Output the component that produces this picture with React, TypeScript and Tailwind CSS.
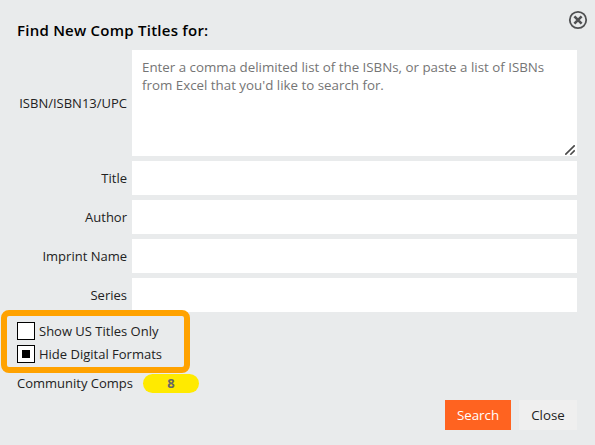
import React, { useState } from 'react'
import { clsx } from 'clsx'

const FIELDS = ['Title', 'Author', 'Imprint Name', 'Series']

interface CheckboxRowProps {
  label: string
  checked: boolean
  onChange: (checked: boolean) => void
}

/**
 * CheckboxRow - square checkbox with a filled block when selected
 */
function CheckboxRow({ label, checked, onChange }: CheckboxRowProps) {
  return (
    <button
      type="button"
      role="checkbox"
      aria-checked={checked}
      onClick={() => onChange(!checked)}
      className="flex h-[18px] items-center gap-1 text-left"
    >
      <span className="flex size-[18px] items-center justify-center border border-black bg-white">
        <span className={clsx('size-2', checked && 'bg-black')} />
      </span>
      <span className="leading-[18px]">{label}</span>
    </button>
  )
}

function CloseIcon() {
  return (
    <svg className="size-5" viewBox="0 0 20 20" fill="none" stroke="#4f5052">
      <circle cx="10" cy="10" r="8.2" strokeWidth="1.8" />
      <path d="M6.4 6.4l7.2 7.2M13.6 6.4l-7.2 7.2" strokeWidth="2.6" />
    </svg>
  )
}

// Grip in the corner of the ISBN box
function ResizeGrip() {
  return (
    <svg
      className="pointer-events-none absolute right-[2px] bottom-[1px] h-[10px] w-[10px]"
      viewBox="0 0 10 10"
      fill="none"
      stroke="#4a4a4a"
      strokeWidth="1.6"
    >
      <path d="M0.3 9.7L9.7 0.3M5.3 9.7L9.7 5.3" />
    </svg>
  )
}

export default function App() {
  const [usOnly, setUsOnly] = useState(false)
  const [hideDigital, setHideDigital] = useState(true)

  return (
    <div className="relative h-[445px] w-[595px] bg-[#e9ebec] pt-5 pr-[18px] pl-[17px] font-['Open_Sans',sans-serif] text-[13px] text-[#222]">
      <button type="button" aria-label="Close dialog" className="absolute top-[10px] right-[7px]">
        <CloseIcon />
      </button>

      <h1 className="h-[30px] text-[15px] leading-[21px] font-semibold tracking-[0.24px] text-black">
        Find New Comp Titles for:
      </h1>

      <div className="flex flex-col gap-[5px]">
        <div className="flex h-[106px] items-center">
          <label htmlFor="isbn" className="w-[110px] pt-[2px] text-right">
            ISBN/ISBN13/UPC
          </label>
          <div className="relative ml-[5px] h-full flex-1">
            <textarea
              id="isbn"
              className="block size-full resize-none bg-white px-[10px] py-2 text-[13.333px] leading-[18px] outline-none placeholder:text-[#757575]"
              placeholder="Enter a comma delimited list of the ISBNs, or paste a list of ISBNs from Excel that you'd like to search for."
            />
            <ResizeGrip />
          </div>
        </div>

        {FIELDS.map((field) => (
          <div key={field} className="flex h-[34px] items-center">
            <label htmlFor={field} className="w-[110px] pt-[2px] text-right">
              {field}
            </label>
            <input id={field} type="text" className="ml-[5px] h-full min-w-0 flex-1 bg-white px-[10px] outline-none" />
          </div>
        ))}
      </div>

      {/* Highlighted filter options */}
      <div className="relative -mt-[2px] -ml-4 flex h-[63px] w-[189px] flex-col gap-[5px] rounded-lg border-[6px] border-[#ffa200] pt-[6px] pl-[10px]">
        <CheckboxRow label="Show US Titles Only" checked={usOnly} onChange={setUsOnly} />
        <CheckboxRow label="Hide Digital Formats" checked={hideDigital} onChange={setHideDigital} />
      </div>

      <div className="mt-[1px] flex h-[19px] items-center">
        <span className="w-[126px]">Community Comps</span>
        <span className="flex h-[19px] w-14 items-center justify-center rounded-full bg-[#ffea00] text-[13px] font-bold text-[#666]">
          8
        </span>
      </div>

      <div className="mt-[7px] flex justify-end gap-2 text-[13.333px]">
        <button type="button" className="h-[30px] w-[66px] bg-[#ff6320] pt-px text-white">
          Search
        </button>
        <button type="button" className="h-[30px] w-[58px] bg-[#efefef] pt-px">
          Close
        </button>
      </div>
    </div>
  )
}
